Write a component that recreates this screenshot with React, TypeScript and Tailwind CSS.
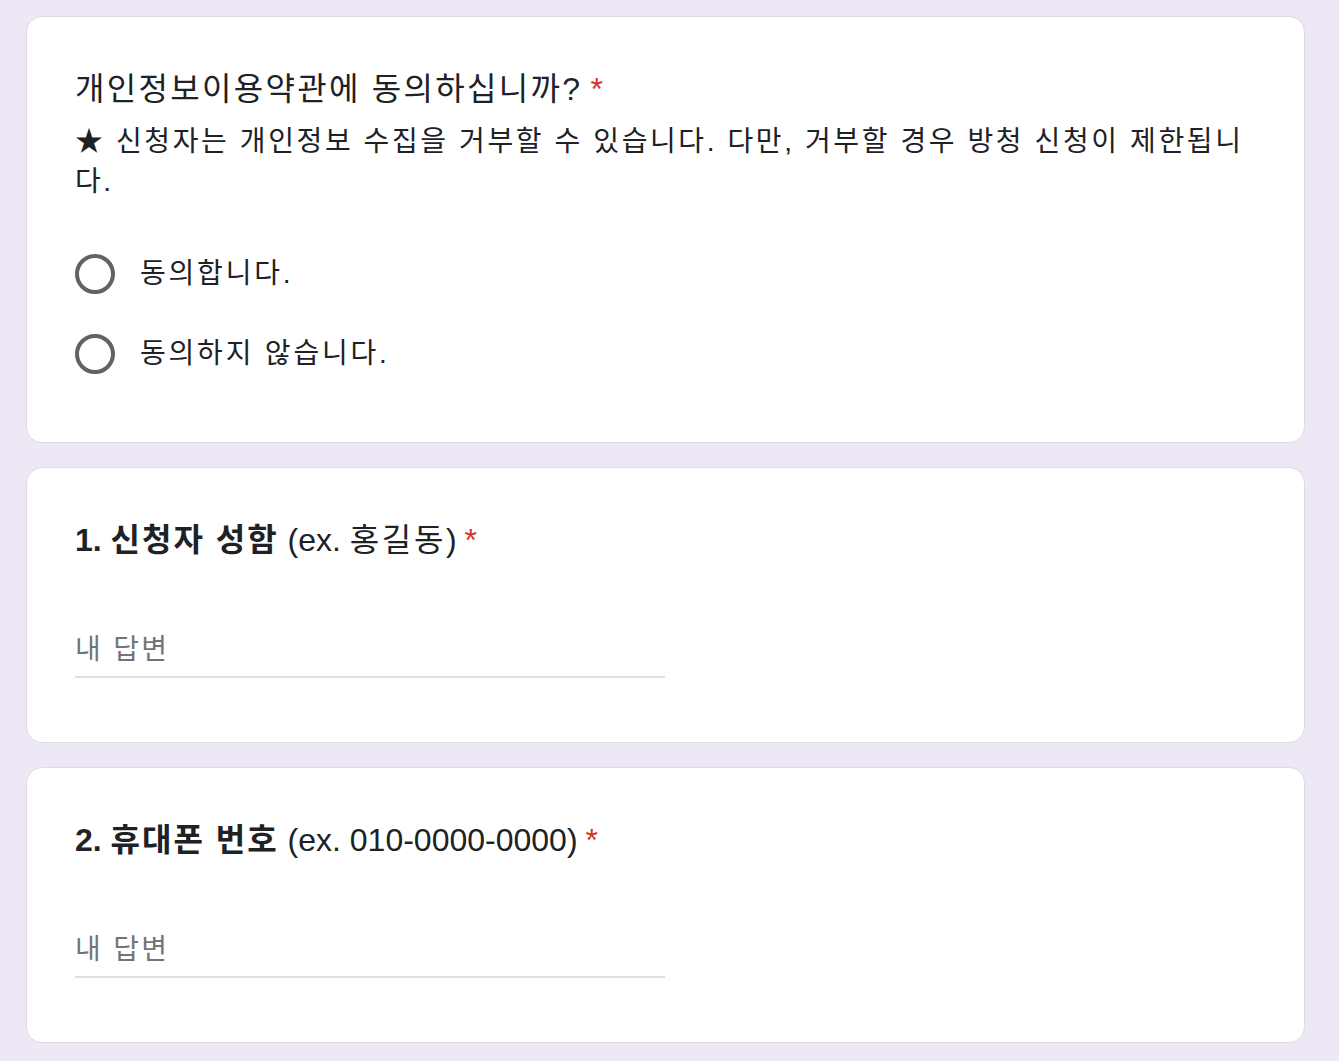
import React from "react";

const FONT = { fontFamily: '"Liberation Sans", Arial, "Noto Sans CJK KR", sans-serif' };

function Radio({ label }: { label: string }) {
  return (
    <div className="flex h-[80px] items-center">
      <div className="flex h-[40px] w-[40px] items-center justify-center">
        <div className="h-[40px] w-[40px] rounded-full border-[4px] border-[#5f6368]" />
      </div>
      <span className="ml-[25px] text-[28px] leading-[40px] tracking-[2.8px] text-[#202124]">{label}</span>
    </div>
  );
}

function TextQuestion({
  num,
  bold,
  pre,
  ko,
  post,
}: {
  num: string;
  bold: string;
  pre: string;
  ko: string;
  post: string;
}) {
  return (
    <div className="rounded-[16px] border border-[#dadce0] bg-white px-[48px] pt-[48px] pb-[48px]">
      <div className="text-[32px] leading-[48px] text-[#202124]">
        <span className="font-bold">
          {num} <span className="tracking-[2px]">{bold}</span>
        </span>{" "}
        {pre}
        <span className="tracking-[2.6px]">{ko}</span>
        {post}
        <span className="pl-[8px] text-[#d93025]">*</span>
      </div>
      <div className="mt-[62px] w-[590px] border-b-2 border-[#e0e0e0] pb-[2px]">
        <div className="text-[28px] leading-[48px] tracking-[2.3px] text-[#70757a]">내 답변</div>
      </div>
      <div className="h-[16px]" />
    </div>
  );
}

export default function App() {
  return (
    <div className="min-h-[1061px] bg-[#ede7f6] pt-[16px]" style={FONT}>
      <div className="ml-[26px] flex w-[1279px] flex-col gap-[24px]">
        <div className="rounded-[16px] border border-[#dadce0] bg-white px-[48px] pt-[48px] pb-[48px]">
          <div className="text-[32px] leading-[48px] text-[#202124]">
            <span className="tracking-[2.3px]">개인정보이용약관에 동의하십니까?</span>
            <span className="pl-[8px] text-[#d93025]">*</span>
          </div>
          <div className="mt-[9px] text-[28px] leading-[40px] tracking-[2.6px] text-[#202124]">
            ★ 신청자는 개인정보 수집을 거부할 수 있습니다. 다만, 거부할 경우 방청 신청이 제한됩니다.
          </div>
          <div className="mt-[32px] flex flex-col">
            <Radio label="동의합니다." />
            <Radio label="동의하지 않습니다." />
          </div>
        </div>
        <TextQuestion num="1." bold="신청자 성함" pre="(ex. " ko="홍길동" post=")" />
        <TextQuestion num="2." bold="휴대폰 번호" pre="(ex. 010-0000-0000" ko="" post=")" />
      </div>
    </div>
  );
}
